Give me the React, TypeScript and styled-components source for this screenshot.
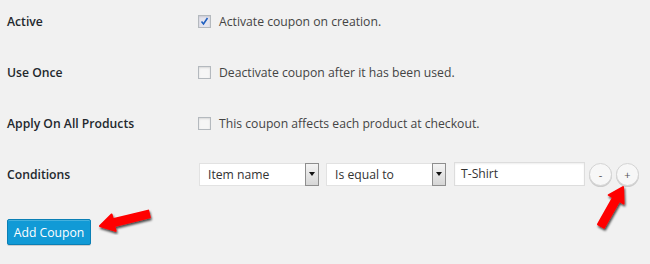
import { createGlobalStyle } from 'styled-components';
import styled from 'styled-components';

const GlobalStyle = createGlobalStyle`
  body {
    margin: 0;
    background: #f1f1f1;
    font-family: "Open Sans", "Liberation Sans", sans-serif;
  }
`;

const Page = styled.div`
  position: relative;
  width: 650px;
  height: 264px;
  padding: 0 7px;
  box-sizing: border-box;
  overflow: hidden;
`;

const Form = styled.div`
  display: grid;
  grid-template-columns: 191px 1fr;
  grid-auto-rows: 42px;
  row-gap: 9px;
  align-items: center;
`;

const Label = styled.div`
  font-size: 12.2px;
  font-weight: 600;
  color: #23282d;
`;

const CheckRow = styled.label`
  display: flex;
  align-items: center;
  gap: 8px;
  font-size: 12.2px;
  color: #444;
`;

const Box = styled.span<{ $checked?: boolean }>`
  width: 11px;
  height: 11px;
  border: 1px solid #b4b9be;
  background: ${(p) => (p.$checked ? '#e4e4ee' : '#f6f6f6')};
  box-shadow: inset 0 1px 2px rgba(0, 0, 0, 0.12);
  display: flex;
  align-items: center;
  justify-content: center;
`;

const Controls = styled.div`
  display: flex;
  align-items: center;
  padding-left: 1px;

  & > * {
    flex-shrink: 0;
  }
`;

const Select = styled.div<{ $gap?: number }>`
  width: 120px;
  height: 23px;
  box-sizing: border-box;
  margin-right: ${(p) => p.$gap ?? 0}px;
  display: flex;
  background: #fff;
  border: 1px solid #e2e2e2;
  border-right: none;
  font-size: 12.2px;
  color: #333;
`;

const SelectText = styled.span`
  flex: 1;
  padding-left: 8px;
  line-height: 21px;
`;

const SelectArrow = styled.span`
  width: 14px;
  margin: -1px 0;
  box-sizing: border-box;
  border: 1px solid #8e8e8e;
  background: linear-gradient(#f4f4f4, #d6d6d6);
  display: flex;
  justify-content: center;
  padding-top: 8px;

  &::after {
    content: '';
    width: 0;
    height: 0;
    border-left: 3px solid transparent;
    border-right: 3px solid transparent;
    border-top: 4px solid #111;
  }
`;

const TextInput = styled.div`
  width: 131px;
  height: 24px;
  box-sizing: border-box;
  margin: -1px 0 0 8px;
  background: #fff;
  border: 1px solid #ddd;
  box-shadow: inset 0 1px 2px rgba(0, 0, 0, 0.07);
  font-size: 12.2px;
  color: #333;
  padding-left: 6px;
  line-height: 22px;
`;

const RoundButton = styled.span`
  width: 23px;
  height: 23px;
  box-sizing: border-box;
  margin: 1px 0 0 4px;
  border-radius: 50%;
  border: 1px solid #d4d4d4;
  background: #f7f7f7;
  box-shadow: 0 1px 0 #ccc;
  color: #555;
  font-size: 11px;
  display: flex;
  align-items: center;
  justify-content: center;
`;

const PrimaryButton = styled.button`
  margin-top: 24px;
  width: 84px;
  height: 26px;
  padding: 0;
  background: #119ad6;
  border: 1px solid #0a7fb5;
  border-radius: 2px;
  box-shadow: inset 0 1px 0 rgba(120, 200, 230, 0.5), 0 1px 0 rgba(0, 0, 0, 0.15);
  color: #fff;
  font-family: inherit;
  font-size: 12.2px;
`;

const Overlay = styled.svg`
  position: absolute;
  left: 0;
  top: 0;
  pointer-events: none;
`;

type Pt = [number, number];

// arrow polygon from tail to tip
function arrowPath(tail: Pt, tip: Pt, shaft = 7, headLen = 14, headW = 17) {
  const dx = tip[0] - tail[0];
  const dy = tip[1] - tail[1];
  const len = Math.hypot(dx, dy);
  const ux = dx / len;
  const uy = dy / len;
  const nx = -uy;
  const ny = ux;
  const bx = tip[0] - ux * headLen;
  const by = tip[1] - uy * headLen;
  const p = (x: number, y: number) => `${x.toFixed(1)},${y.toFixed(1)}`;
  return [
    'M' + p(tail[0] + (nx * shaft) / 2, tail[1] + (ny * shaft) / 2),
    'L' + p(bx + (nx * shaft) / 2, by + (ny * shaft) / 2),
    'L' + p(bx + (nx * headW) / 2, by + (ny * headW) / 2),
    'L' + p(tip[0], tip[1]),
    'L' + p(bx - (nx * headW) / 2, by - (ny * headW) / 2),
    'L' + p(bx - (nx * shaft) / 2, by - (ny * shaft) / 2),
    'L' + p(tail[0] - (nx * shaft) / 2, tail[1] - (ny * shaft) / 2),
    'Z',
  ].join(' ');
}

function Check({ checked }: { checked?: boolean }) {
  return (
    <Box $checked={checked}>
      {checked && (
        <svg width="9" height="9" viewBox="0 0 9 9">
          <path d="M1.5 4.5 L3.5 7 L7.5 1" fill="none" stroke="#1e5fc0" strokeWidth="1.6" />
        </svg>
      )}
    </Box>
  );
}

export default function App() {
  const arrows: [Pt, Pt][] = [
    [[149, 214], [100, 226]],
    [[601, 226], [623, 187]],
  ];

  return (
    <Page>
      <GlobalStyle />
      <Form>
        <Label>Active</Label>
        <CheckRow>
          <Check checked />
          Activate coupon on creation.
        </CheckRow>

        <Label>Use Once</Label>
        <CheckRow>
          <Check />
          Deactivate coupon after it has been used.
        </CheckRow>

        <Label>Apply On All Products</Label>
        <CheckRow>
          <Check />
          This coupon affects each product at checkout.
        </CheckRow>

        <Label>Conditions</Label>
        <Controls>
          <Select $gap={7}>
            <SelectText>Item name</SelectText>
            <SelectArrow />
          </Select>
          <Select>
            <SelectText>Is equal to</SelectText>
            <SelectArrow />
          </Select>
          <TextInput>T-Shirt</TextInput>
          <RoundButton>-</RoundButton>
          <RoundButton>+</RoundButton>
        </Controls>
      </Form>

      <PrimaryButton>Add Coupon</PrimaryButton>

      <Overlay width="650" height="264">
        <defs>
          <filter id="shade" x="-20%" y="-20%" width="140%" height="140%">
            <feDropShadow dx="1" dy="2" stdDeviation="1" floodColor="#000" floodOpacity="0.7" />
          </filter>
        </defs>
        {arrows.map(([tail, tip], i) => (
          <path
            key={i}
            d={arrowPath(tail, tip)}
            fill="#f00"
            stroke="#f00"
            strokeWidth="2"
            strokeLinejoin="round"
            filter="url(#shade)"
          />
        ))}
      </Overlay>
    </Page>
  );
}
